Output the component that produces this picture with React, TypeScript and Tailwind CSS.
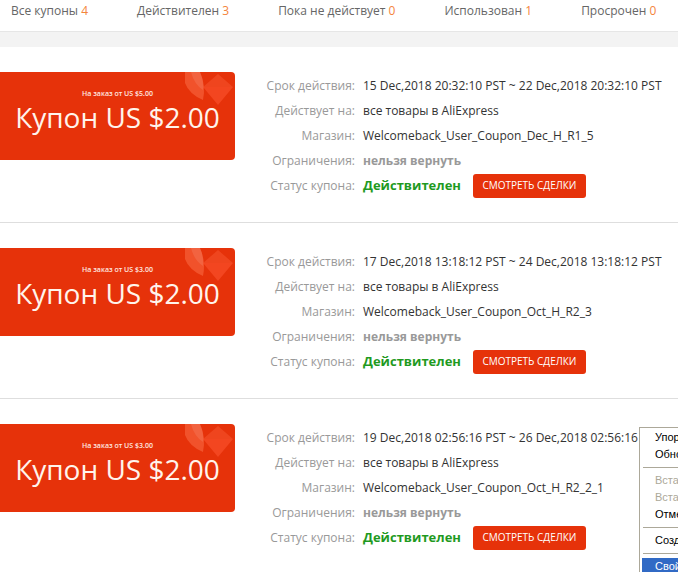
import React from "react";

interface Coupon {
  minOrder: string;
  period: string;
  store: string;
}

const coupons: Coupon[] = [
  {
    minOrder: "На заказ от US $5.00",
    period: "15 Dec,2018 20:32:10 PST ~ 22 Dec,2018 20:32:10 PST",
    store: "Welcomeback_User_Coupon_Dec_H_R1_5",
  },
  {
    minOrder: "На заказ от US $3.00",
    period: "17 Dec,2018 13:18:12 PST ~ 24 Dec,2018 13:18:12 PST",
    store: "Welcomeback_User_Coupon_Oct_H_R2_3",
  },
  {
    minOrder: "На заказ от US $3.00",
    period: "19 Dec,2018 02:56:16 PST ~ 26 Dec,2018 02:56:16 PST",
    store: "Welcomeback_User_Coupon_Oct_H_R2_2_1",
  },
];

const tabs = [
  { label: "Все купоны", count: 4 },
  { label: "Действителен", count: 3 },
  { label: "Пока не действует", count: 0 },
  { label: "Использован", count: 1 },
  { label: "Просрочен", count: 0 },
];

const Decor = () => (
  <svg
    className="absolute left-[185px] top-0"
    width="50"
    height="38"
    viewBox="0 0 50 38"
  >
    <path d="M0 0 H15 Q21 13 18 28 Q4 22 0 11 Z" fill="#ff7a55" fillOpacity="0.45" />
    <path d="M6 0 H15 Q19 9 18 18 Q9 12 6 0 Z" fill="#ffffff" fillOpacity="0.1" />
    <path d="M18 15 L33 2 L48 15 Z" fill="#ff6a45" fillOpacity="0.35" />
    <path d="M18 15 L48 15 L33 33 Z" fill="#ff5a35" fillOpacity="0.5" />
  </svg>
);

const Row = ({ label, children }: { label: string; children: React.ReactNode }) => (
  <div className="flex items-center h-[25px]">
    <span className="w-[100px] text-right text-[#999] shrink-0">{label}</span>
    <div className="ml-[8px] flex items-center whitespace-nowrap">{children}</div>
  </div>
);

const CouponItem = ({ coupon }: { coupon: Coupon }) => (
  <div className="flex items-start pt-[25px] pb-[24px] border-b border-[#dedede]">
    <div className="relative w-[235px] h-[88px] shrink-0 bg-[#e6320a] rounded-r-[4px] flex flex-col items-center pt-[17px] text-white">
      <Decor />
      <span className="text-[7px] leading-[10px] font-semibold text-[#ffe9e0]">
        {coupon.minOrder}
      </span>
      <span className="text-[28px] leading-[36px] text-[#fff4ec]">
        Купон US $2.00
      </span>
    </div>
    <div className="ml-[20px] pt-[1px] text-[12px] text-[#333]">
      <Row label="Срок действия:">{coupon.period}</Row>
      <Row label="Действует на:">все товары в AliExpress</Row>
      <Row label="Магазин:">{coupon.store}</Row>
      <Row label="Ограничения:">
        <span className="font-bold text-[#999]">нельзя вернуть</span>
      </Row>
      <Row label="Статус купона:">
        <span className="font-bold text-[#1f9a1f] text-[13px]">Действителен</span>
        <button className="ml-[12px] h-[24px] w-[113px] bg-[#e6320a] text-white text-[10px] rounded-[3px]">
          СМОТРЕТЬ СДЕЛКИ
        </button>
      </Row>
    </div>
  </div>
);

const MenuItem = ({
  text,
  disabled,
  active,
}: {
  text: string;
  disabled?: boolean;
  active?: boolean;
}) => (
  <div
    className={
      active
        ? "h-[17px] leading-[17px] pl-[13px] bg-[#316ac5] text-white"
        : disabled
        ? "h-[17px] leading-[17px] pl-[13px] text-[#aca899]"
        : "h-[17px] leading-[17px] pl-[13px] text-black"
    }
  >
    {text}
  </div>
);

const Sep = () => (
  <div className="h-[9px] flex items-center px-[1px]">
    <div className="h-px w-full bg-[#aca899]" />
  </div>
);

export default function App() {
  return (
    <div className="relative w-[678px] h-[572px] overflow-hidden bg-white font-['Open_Sans',sans-serif]">
      <div className="h-[31px] flex gap-[49px] pl-[11px] pt-[2px] text-[12px] leading-[18px] text-[#666] whitespace-nowrap">
        {tabs.map((t) => (
          <span key={t.label}>
            {t.label} <span className="text-[#f4843c]">{t.count}</span>
          </span>
        ))}
      </div>
      <div className="h-[16px] border-t border-[#e6e6e6] bg-[#f3f3f3]" />

      {coupons.map((c) => (
        <CouponItem key={c.store} coupon={c} />
      ))}

      <div className="absolute left-[639px] top-[427px] w-[160px] border border-[#aca899] bg-white py-[1px] px-[2px] text-[11px] font-['Liberation_Sans',sans-serif] shadow-[2px_2px_2px_rgba(0,0,0,0.25)]">
        <MenuItem text="Упорядочить значки" />
        <MenuItem text="Обновить" />
        <Sep />
        <MenuItem text="Вставить" disabled />
        <MenuItem text="Вставить ярлык" disabled />
        <MenuItem text="Отменить переименование" />
        <Sep />
        <MenuItem text="Создать" />
        <Sep />
        <MenuItem text="Свойства" active />
      </div>
    </div>
  );
}
